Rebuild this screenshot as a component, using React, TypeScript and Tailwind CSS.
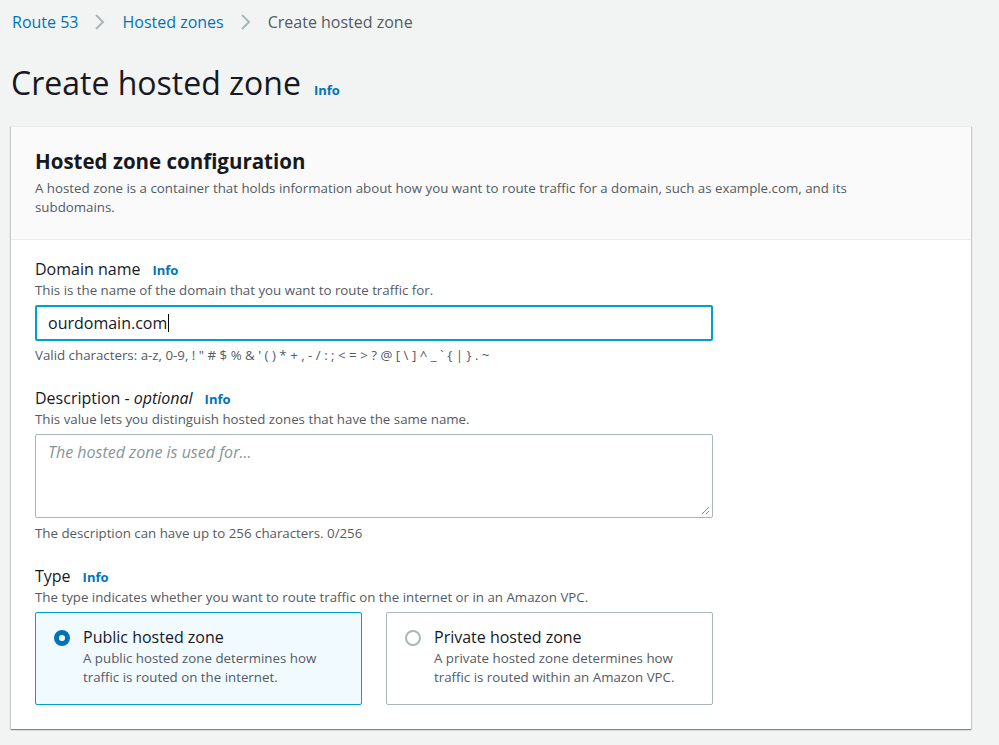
import React from 'react';

const Info = () => <span className="text-[13px] font-bold text-[#0073bb] ml-[12px]">Info</span>;

export default function App() {
  return (
    <div className="min-h-[745px] bg-[#f2f3f3] text-[#16191f]" style={{ fontFamily: '"Open Sans", sans-serif' }}>
      {/* Breadcrumb */}
      <div className="flex items-center h-[44px] pl-[12px] text-[16px]">
        <span className="text-[#0073bb]">Route 53</span>
        <svg width="14" height="20" viewBox="0 0 14 20" className="mx-[15px]"><path d="M3 3l7 7-7 7" fill="none" stroke="#aab7b8" strokeWidth="2" /></svg>
        <span className="text-[#0073bb]">Hosted zones</span>
        <svg width="14" height="20" viewBox="0 0 14 20" className="mx-[15px]"><path d="M3 3l7 7-7 7" fill="none" stroke="#aab7b8" strokeWidth="2" /></svg>
        <span className="text-[#545b64]">Create hosted zone</span>
      </div>
      {/* Title */}
      <div className="flex items-baseline pl-[11px] pt-[18px] h-[82px]">
        <h1 className="text-[32px] leading-[42px]">Create hosted zone</h1>
        <span className="text-[13px] font-bold text-[#0073bb] ml-[13px]">Info</span>
      </div>
      {/* Card */}
      <div className="ml-[11px] w-[960px] bg-white border-t border-[#eaeded] shadow-[0_1px_1px_0_rgba(0,28,36,0.3),1px_1px_1px_0_rgba(0,28,36,0.15),-1px_1px_1px_0_rgba(0,28,36,0.15)]">
        <div className="bg-[#fafafa] border-b border-[#eaeded] px-[24px] pt-[20px] pb-[22px]">
          <h2 className="text-[20.5px] font-bold leading-[28px]">Hosted zone configuration</h2>
          <p className="text-[13.3px] text-[#545b64] leading-[19px] mt-[4px] pr-[40px]">
            A hosted zone is a container that holds information about how you want to route traffic for a domain, such as example.com, and its subdomains.
          </p>
        </div>
        <div className="px-[24px] pt-[18px] pb-[24px]">
          <div className="text-[16px] leading-[22px] flex items-baseline">Domain name<Info /></div>
          <p className="text-[13.3px] text-[#545b64] leading-[18px]">This is the name of the domain that you want to route traffic for.</p>
          <div className="mt-[6px] w-[678px] h-[36px] border-2 border-[#00a1c9] rounded-[2px] flex items-center px-[11px] text-[16px]">
            ourdomain.com<span className="w-px h-[18px] bg-black ml-px" />
          </div>
          <p className="text-[13.3px] text-[#545b64] leading-[18px] mt-[5px]">
            Valid characters: a-z, 0-9, ! " # $ % &amp; ' ( ) * + , - / : ; &lt; = &gt; ? @ [ \ ] ^ _ ` {'{'} | {'}'} . ~
          </p>

          <div className="mt-[23px] text-[16px] leading-[22px] flex items-baseline">Description - <i className="ml-1">optional</i><Info /></div>
          <p className="text-[13.3px] text-[#545b64] leading-[18px]">This value lets you distinguish hosted zones that have the same name.</p>
          <div className="relative mt-[6px] w-[678px] h-[84px] border border-[#aab7b8] rounded-[2px] px-[12px] py-[5px] text-[16px] italic text-[#879596]">
            The hosted zone is used for...
            <svg width="10" height="10" viewBox="0 0 10 10" className="absolute right-[2px] bottom-[2px]"><path d="M9 2L2 9M9 6L6 9" stroke="#879596" strokeWidth="1" /></svg>
          </div>
          <p className="text-[13.3px] text-[#545b64] leading-[18px] mt-[6px]">The description can have up to 256 characters. 0/256</p>

          <div className="mt-[23px] text-[16px] leading-[22px] flex items-baseline">Type<Info /></div>
          <p className="text-[13.3px] text-[#545b64] leading-[18px]">The type indicates whether you want to route traffic on the internet or in an Amazon VPC.</p>
          <div className="mt-[6px] flex gap-[24px]">
            <div className="w-[327px] h-[93px] border border-[#00a1c9] bg-[#f1faff] rounded-[2px] flex pl-[18px] pt-[13px]">
              <span className="w-[16px] h-[16px] rounded-full border-[5px] border-[#0073bb] bg-white mt-[4px] shrink-0" />
              <div className="ml-[13px]">
                <div className="text-[16px] leading-[23px]">Public hosted zone</div>
                <p className="text-[13.3px] text-[#545b64] leading-[19px]">A public hosted zone determines how<br />traffic is routed on the internet.</p>
              </div>
            </div>
            <div className="w-[327px] h-[93px] border border-[#aab7b8] bg-white rounded-[2px] flex pl-[18px] pt-[13px]">
              <span className="w-[16px] h-[16px] rounded-full border-2 border-[#aab7b8] bg-white mt-[4px] shrink-0" />
              <div className="ml-[13px]">
                <div className="text-[16px] leading-[23px]">Private hosted zone</div>
                <p className="text-[13.3px] text-[#545b64] leading-[19px]">A private hosted zone determines how<br />traffic is routed within an Amazon VPC.</p>
              </div>
            </div>
          </div>
        </div>
      </div>
    </div>
  );
}
